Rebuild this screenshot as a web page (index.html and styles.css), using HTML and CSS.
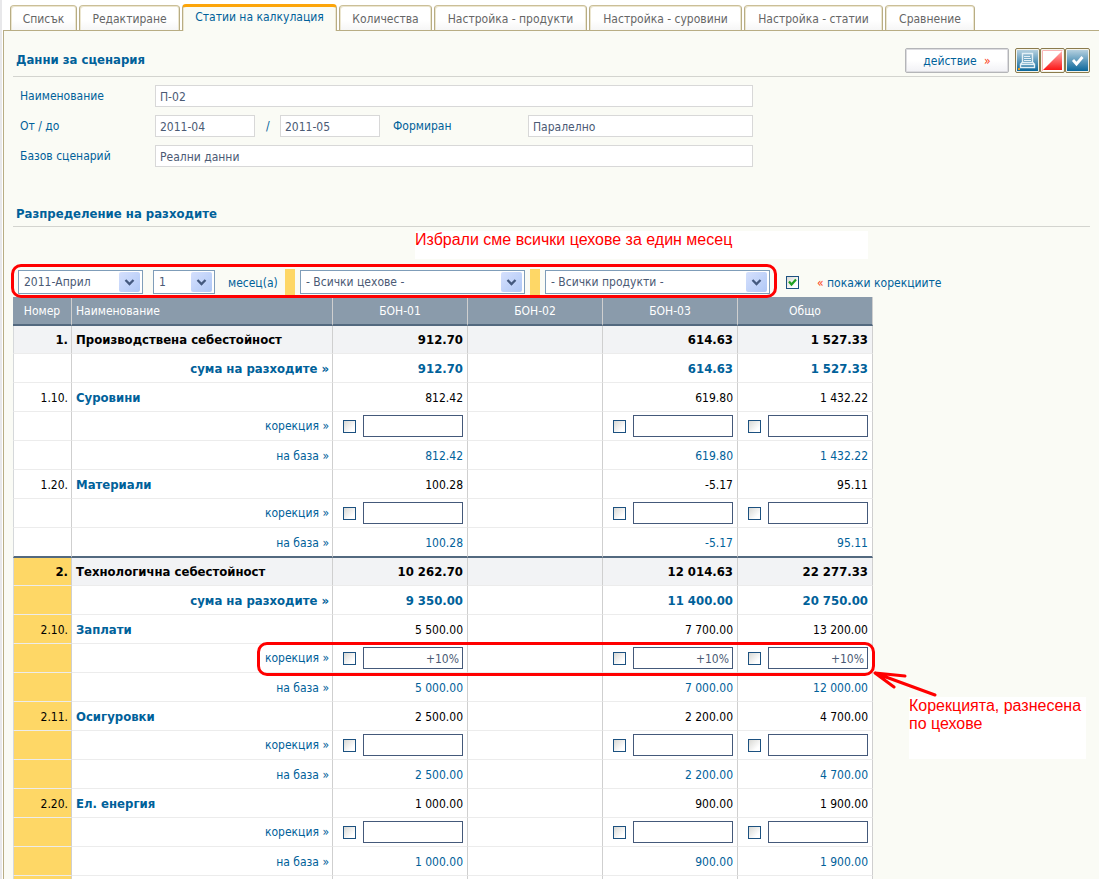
FILE: index.html
```html
<!DOCTYPE html>
<html lang="bg">
<head>
<meta charset="utf-8">
<title>Статии на калкулация</title>
<link rel="stylesheet" href="styles.css">
</head>
<body>
<div class="page">
<nav class="tabs">
<a href="#" class="tab w-list">Списък</a>
<a href="#" class="tab w-edit">Редактиране</a>
<a href="#" class="tab w-items active">Статии на калкулация</a>
<a href="#" class="tab w-qty">Количества</a>
<a href="#" class="tab w-setup">Настройка - продукти</a>
<a href="#" class="tab w-setup">Настройка - суровини</a>
<a href="#" class="tab w-art">Настройка - статии</a>
<a href="#" class="tab w-cmp">Сравнение</a>
</nav>
<main class="panel">
<header class="section-head">
<h2>Данни за сценария</h2>
<div class="actions">
<button type="button" class="action-btn">действие <span class="mark">»</span></button>
<div class="icon-group">
<button type="button" class="icon-btn" aria-label="Печат"><svg width="23" height="23" viewBox="0 0 23 23"><defs><linearGradient id="blue" x1="0" y1="0" x2="0" y2="1"><stop offset="0" stop-color="#b5d0df"/><stop offset="1" stop-color="#0b679b"/></linearGradient></defs><rect x="1" y="1" width="21" height="21" fill="url(#blue)"/><path d="M6.500 4.500h10v9h-10zM4.500 15.500h14v3h-14zM6 13.500l-1.500 2M17 13.500l1.500 2" fill="none" stroke="#e4f0f6" stroke-width="1.400"/><path d="M8 7.500h6M8 9.500h7M8 11.500h7" stroke="#e4f0f6"/><path d="M2 19h2v2h-2z" fill="#e09a20"/></svg></button>
<button type="button" class="icon-btn" aria-label="Цвят"><svg width="23" height="23" viewBox="0 0 23 23"><defs><linearGradient id="red" x1="0" y1="0" x2="0" y2="1"><stop offset="0" stop-color="#ffb0b0"/><stop offset="1" stop-color="#fb1717"/></linearGradient></defs><path d="M1 1h21v21h-21z" fill="#fff"/><path d="M21 2v19h-19z" fill="url(#red)"/><path d="M1.500 22v-20.500h20" fill="none" stroke="#f9b6b6"/></svg></button>
<button type="button" class="icon-btn" aria-label="Запис"><svg width="23" height="23" viewBox="0 0 23 23"><rect x="1" y="1" width="21" height="21" fill="url(#blue)"/><path d="M7 11l3.500 4 6-7" fill="none" stroke="#fff" stroke-width="2.800"/></svg></button>
</div>
</div>
</header>
<form class="fields">
<label for="name">Наименование</label>
<input id="name" class="wide" value="П-02">
<label for="from">От / до</label>
<input id="from" value="2011-04">
<span class="slash">/</span>
<input id="to" aria-label="До" value="2011-05">
<label for="formed" class="formed">Формиран</label>
<input id="formed" value="Паралелно">
<label for="base">Базов сценарий</label>
<input id="base" class="wide" value="Реални данни">
</form>
<header class="section-head second">
<h2>Разпределение на разходите</h2>
<p class="note note-filter">Избрали сме всички цехове за един месец</p>
</header>
<div class="filters">
<div class="filter-main">
<span class="pick s-month"><select aria-label="Начален месец"><option>2011-Април</option></select><svg class="arrow" viewBox="0 0 21 20"><path d="M6.500 8l4 4 4-4" /></svg></span>
<span class="pick s-count"><select id="count"><option>1</option></select><svg class="arrow" viewBox="0 0 21 20"><path d="M6.500 8l4 4 4-4" /></svg></span>
<label for="count" class="months">месец(а)</label>
<span class="divider"></span>
<span class="pick s-long"><select aria-label="Цехове"><option>- Всички цехове -</option></select><svg class="arrow" viewBox="0 0 21 20"><path d="M6.500 8l4 4 4-4" /></svg></span>
<span class="divider"></span>
<span class="pick s-long"><select aria-label="Продукти"><option>- Всички продукти -</option></select><svg class="arrow" viewBox="0 0 21 20"><path d="M6.500 8l4 4 4-4" /></svg></span>
<span class="frame frame-filter"></span>
</div>
<span class="tick"><input type="checkbox" id="show" checked><svg viewBox="0 0 13 13"><path d="M3 5.500l2.500 3 4.500-5" /></svg></span>
<label for="show" class="show"><span class="mark">«</span> покажи корекциите</label>
</div>
<table class="costs">
<colgroup><col class="c-num"><col class="c-name"><col class="c-val"><col class="c-val"><col class="c-val"><col class="c-val"></colgroup>
<thead><tr><th>Номер</th><th class="left">Наименование</th><th>БОН-01</th><th>БОН-02</th><th>БОН-03</th><th>Общо</th></tr></thead>
<tbody>
<tr class="total"><td>1.</td><td class="left">Производствена себестойност</td><td>912.70</td><td></td><td>614.63</td><td>1 527.33</td></tr>
<tr class="sum"><td></td><td>сума на разходите »</td><td>912.70</td><td></td><td>614.63</td><td>1 527.33</td></tr>
<tr><td>1.10.</td><td class="left"><a href="#">Суровини</a></td><td>812.42</td><td></td><td>619.80</td><td>1 432.22</td></tr>
<tr class="fix"><td></td><td>корекция »</td><td><div class="edit"><input type="checkbox" aria-label="БОН-01"><input class="val" aria-label="Корекция БОН-01"></div></td><td></td><td><div class="edit"><input type="checkbox" aria-label="БОН-03"><input class="val" aria-label="Корекция БОН-03"></div></td><td><div class="edit"><input type="checkbox" aria-label="Общо"><input class="val" aria-label="Корекция общо"></div></td></tr>
<tr class="base"><td></td><td>на база »</td><td>812.42</td><td></td><td>619.80</td><td>1 432.22</td></tr>
<tr><td>1.20.</td><td class="left"><a href="#">Материали</a></td><td>100.28</td><td></td><td>-5.17</td><td>95.11</td></tr>
<tr class="fix"><td></td><td>корекция »</td><td><div class="edit"><input type="checkbox" aria-label="БОН-01"><input class="val" aria-label="Корекция БОН-01"></div></td><td></td><td><div class="edit"><input type="checkbox" aria-label="БОН-03"><input class="val" aria-label="Корекция БОН-03"></div></td><td><div class="edit"><input type="checkbox" aria-label="Общо"><input class="val" aria-label="Корекция общо"></div></td></tr>
<tr class="base group-end"><td></td><td>на база »</td><td>100.28</td><td></td><td>-5.17</td><td>95.11</td></tr>
</tbody>
<tbody class="marked">
<tr class="total"><td>2.</td><td class="left">Технологична себестойност</td><td>10 262.70</td><td></td><td>12 014.63</td><td>22 277.33</td></tr>
<tr class="sum"><td></td><td>сума на разходите »</td><td>9 350.00</td><td></td><td>11 400.00</td><td>20 750.00</td></tr>
<tr><td>2.10.</td><td class="left"><a href="#">Заплати</a></td><td>5 500.00</td><td></td><td>7 700.00</td><td>13 200.00</td></tr>
<tr class="fix"><td></td><td class="anchor">корекция »<span class="frame frame-row"></span></td><td><div class="edit"><input type="checkbox" aria-label="БОН-01"><input class="val" aria-label="Корекция БОН-01" value="+10%"></div></td><td></td><td><div class="edit"><input type="checkbox" aria-label="БОН-03"><input class="val" aria-label="Корекция БОН-03" value="+10%"></div></td><td class="anchor"><div class="edit"><input type="checkbox" aria-label="Общо"><input class="val" aria-label="Корекция общо" value="+10%"></div><div class="note note-row">Корекцията, разнесена<br>по цехове</div><svg class="pointer" viewBox="0 0 66 28"><path d="M63 24L3 2L33 5M3 2L22 16" /></svg></td></tr>
<tr class="base"><td></td><td>на база »</td><td>5 000.00</td><td></td><td>7 000.00</td><td>12 000.00</td></tr>
<tr><td>2.11.</td><td class="left"><a href="#">Осигуровки</a></td><td>2 500.00</td><td></td><td>2 200.00</td><td>4 700.00</td></tr>
<tr class="fix"><td></td><td>корекция »</td><td><div class="edit"><input type="checkbox" aria-label="БОН-01"><input class="val" aria-label="Корекция БОН-01"></div></td><td></td><td><div class="edit"><input type="checkbox" aria-label="БОН-03"><input class="val" aria-label="Корекция БОН-03"></div></td><td><div class="edit"><input type="checkbox" aria-label="Общо"><input class="val" aria-label="Корекция общо"></div></td></tr>
<tr class="base"><td></td><td>на база »</td><td>2 500.00</td><td></td><td>2 200.00</td><td>4 700.00</td></tr>
<tr><td>2.20.</td><td class="left"><a href="#">Ел. енергия</a></td><td>1 000.00</td><td></td><td>900.00</td><td>1 900.00</td></tr>
<tr class="fix"><td></td><td>корекция »</td><td><div class="edit"><input type="checkbox" aria-label="БОН-01"><input class="val" aria-label="Корекция БОН-01"></div></td><td></td><td><div class="edit"><input type="checkbox" aria-label="БОН-03"><input class="val" aria-label="Корекция БОН-03"></div></td><td><div class="edit"><input type="checkbox" aria-label="Общо"><input class="val" aria-label="Корекция общо"></div></td></tr>
<tr class="base"><td></td><td>на база »</td><td>1 000.00</td><td></td><td>900.00</td><td>1 900.00</td></tr>
<tr><td></td><td></td><td></td><td></td><td></td><td></td></tr>
</tbody>
</table>
</main>
</div>
</body>
</html>
```
FILE: styles.css
```css
* { box-sizing: border-box; }
body {
  margin: 0;
  background: #fff;
  color: #00619a;
  font: 12px/16px "DejaVu Sans Condensed", "DejaVu Sans", sans-serif;
}
input, select, button { font: inherit; color: #4b5a74; border-radius: 0; }
a { color: inherit; text-decoration: none; }
.page {
  height: 100vh;
  overflow: hidden;
  display: flex;
  flex-direction: column;
  border-left: 2px solid #e8e8ea;
  padding-left: 1px;
}

/* Tabs */
.tabs {
  display: flex;
  align-items: flex-end;
  gap: 2px;
  height: 31px;
  flex: none;
  padding-left: 7px;
  box-shadow: inset 0 -1px #b8ad84;
}
.tab {
  height: 26px;
  padding-top: 5px;
  border: 1px solid #b8ad84;
  border-top-color: #cbbf98;
  border-radius: 4px 4px 0 0;
  box-shadow: inset 1px 1px #ece6d0, inset -1px 0 #ece6d0;
  background: linear-gradient(#fff 60%, #f6f6f6);
  color: #666;
  text-align: center;
  white-space: nowrap;
}
.tab.active {
  height: 27px;
  padding-top: 2px;
  border-top: 3px solid #fca50a;
  border-bottom: 0;
  background: #fafbf5;
  color: #00619a;
  box-shadow: inset 1px 0 #ece6d0, inset -1px 0 #ece6d0;
}
.w-list { width: 67px; }
.w-edit { width: 101px; }
.w-items { width: 155px; }
.w-qty { width: 93px; }
.w-setup { width: 153px; }
.w-art { width: 139px; }
.w-cmp { width: 90px; }

.panel {
  flex: 1;
  border-left: 1px solid #b8ad84;
  padding: 0 9px;
  background: #fafbf5;
}
.section-head {
  position: relative;
  display: flex;
  justify-content: space-between;
  height: 46px;
  padding: 17px 0 0 3px;
  border-bottom: 1px solid #d3d4cf;
}
.section-head.second { height: 41px; margin-top: 19px; padding-top: 20px; }
h2 { margin: 0; font-size: 13px; line-height: 24px; }
.second h2 { line-height: 16px; }
.actions { display: flex; gap: 6px; }
.action-btn {
  width: 104px;
  height: 25px;
  padding: 0;
  border: 1px solid #b4b5b8;
  border-radius: 2px;
  box-shadow: inset 0 0 0 1px #dcdce0;
  background: linear-gradient(#fff 50%, #f1f1f5);
  color: #00619a;
}
.mark { color: #fa3c14; }
.action-btn .mark { margin-left: 4px; }
.icon-group { display: flex; }
.icon-btn {
  width: 25px;
  height: 25px;
  padding: 0;
  border: 1px solid #8b7b4c;
  border-radius: 2px;
  background: #f3f3ea;
}
.icon-btn svg { display: block; }

/* Scenario fields */
.fields {
  display: grid;
  grid-template-columns: 135px 100px 25px 100px 148px 225px;
  gap: 8px 0;
  padding: 8px 0 0 7px;
}
.fields label, .slash { line-height: 22px; }
.fields .slash { padding-left: 11px; }
.fields .formed { padding-left: 13px; }
.fields input {
  min-width: 0;
  height: 22px;
  padding: 2px 4px 0;
  border: 1px solid #d8d8d8;
  background: #fff;
}
.fields .wide { grid-column: 2 / 7; }

/* Filter bar */
.filters { display: flex; align-items: center; height: 30px; margin-top: 40px; }
.filter-main {
  position: relative;
  display: flex;
  align-items: center;
  height: 30px;
  padding: 0 2px 0 5px;
}
.pick { position: relative; height: 24px; }
.pick select {
  appearance: none;
  width: 100%;
  height: 24px;
  padding: 0 5px;
  border: 1px solid #7f9db9;
  background: #fff;
}
.arrow {
  position: absolute;
  right: 3px;
  top: 2px;
  width: 21px;
  height: 20px;
  border-radius: 2px;
  background: linear-gradient(135deg, #d5e0fd, #b0c8f6);
  pointer-events: none;
}
.arrow path { fill: none; stroke: #44597f; stroke-width: 2.3; }
.s-month { width: 125px; margin-right: 10px; }
.s-count { width: 62px; }
.s-long { width: 225px; margin: 0 5px; }
.months { width: 70px; padding: 2px 0 0 13px; }
.divider { width: 10px; height: 27px; background: #fed766; }
.tick { position: relative; width: 13px; height: 13px; margin-left: 9px; }
.tick svg { position: absolute; inset: 0; pointer-events: none; }
.tick path { fill: none; stroke: #21a121; stroke-width: 2.2; }
input[type="checkbox"] {
  appearance: none;
  display: block;
  flex: none;
  width: 13px;
  height: 13px;
  margin: 0;
  border: 1px solid #1c5180;
  background: linear-gradient(135deg, #d8d8d4, #fff 75%);
}
.show { margin-left: 18px; padding-top: 2px; }

/* Cost table */
.costs {
  table-layout: fixed;
  width: 860px;
  border-collapse: separate;
  border-spacing: 0;
  background: #fff;
}
.c-num { width: 59px; }
.c-name { width: 261px; }
.c-val { width: 135px; }
th, td {
  height: 29px;
  padding: 1px 4px 0;
  border-right: 1px solid #cfcfcf;
  border-bottom: 1px solid #ececec;
  text-align: right;
}
.fix td { padding-top: 0; }
td:first-child { border-left: 1px solid #d5d8da; }
td:nth-child(-n+2) { padding-right: 3px; }
th {
  border-bottom: 2px solid #53697f;
  background: #8a9bab;
  color: #fff;
  font-weight: normal;
  text-align: center;
}
.left { text-align: left; }
td { color: #000; }
td a, .base td, .sum td, .fix td { color: #00619a; }
td a, .total td, .sum td { font-size: 13px; font-weight: bold; }
.total td { height: 28px; background: #f2f3f5; }
.group-end td { height: 30px; border-bottom: 2px solid #53697f; }
.marked td:first-child { background: #fed766; }
.edit { display: flex; align-items: center; justify-content: flex-end; gap: 7px; }
.edit .val {
  width: 100px;
  height: 22px;
  padding: 2px 3px 0;
  border: 1px solid #44597a;
  background: #fff;
  text-align: right;
}

/* Red callouts */
.anchor { position: relative; }
.note {
  position: absolute;
  margin: 0;
  background: #fff;
  color: #f00;
  font: 16px/18px "Liberation Sans", sans-serif;
  text-align: left;
  white-space: nowrap;
}
.note-filter { left: 402px; top: 45px; width: 453px; height: 28px; }
.note-row { left: 171px; top: 53px; width: 177px; height: 62px; }
.frame {
  position: absolute;
  z-index: 2;
  border: 3px solid #f00;
  border-radius: 10px;
  pointer-events: none;
}
.frame-filter { inset: -3px 0 -1px -2px; }
.frame-row { left: 185px; top: -2px; width: 618px; height: 34px; }
.pointer { position: absolute; z-index: 2; left: 134px; top: 27px; width: 66px; height: 28px; }
.pointer path { fill: none; stroke: #f00; stroke-width: 3; stroke-linecap: round; }
```
